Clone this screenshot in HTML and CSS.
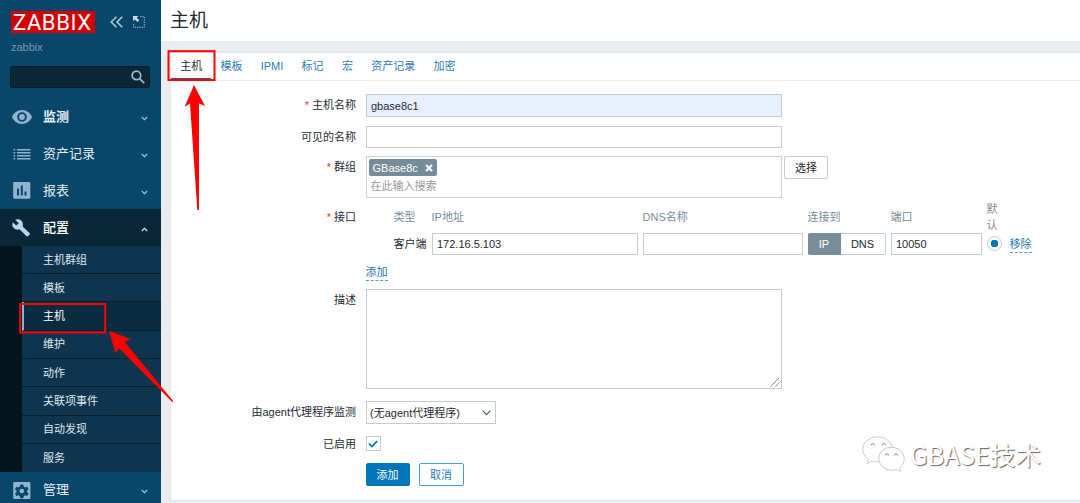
FILE: index.html
```html
<!DOCTYPE html>
<html lang="zh-CN">
<head>
    <meta charset="UTF-8">
    <meta name="viewport" content="width=device-width, initial-scale=1.0">
    <title>主机</title>
    <link rel="stylesheet" href="styles.css">
</head>
<body>
    <aside class="sidebar">
        <div class="sidebar-header">
            <div class="logo">ZABBIX</div>
            <svg class="collapse-icon" width="14" height="12" viewBox="0 0 14 12"><path d="M6.5 .7L1.2 6l5.3 5.3M12.3.7L7 6l5.3 5.3"/></svg>
            <svg class="kiosk-icon" width="12" height="12" viewBox="0 0 12 12">
                <path class="dots" d="M7 .7h4.3v10.6H.7V7"/>
                <path class="arrow" d="M0 0h5.4L3.7 1.7l2.6 2.6-1.8 1.8-2.7-2.7L0 5.3z"/>
            </svg>
        </div>
        <div class="server-name">zabbix</div>
        <div class="search">
            <svg width="14" height="14" viewBox="0 0 14 14"><circle cx="5.4" cy="5.4" r="4.3"/><path d="M8.6 8.6l4.6 4.6"/></svg>
        </div>
        <nav class="menu">
            <a class="menu-item current">
                <svg class="menu-icon" width="20" height="14" viewBox="0 0 20 14"><path fill-rule="evenodd" d="M10 0C5.400 0 1.600 2.900 0 7c1.600 4.100 5.400 7 10 7s8.400-2.900 10-7c-1.600-4.100-5.400-7-10-7zm0 2.200a4.800 4.800 0 1 1 0 9.600 4.800 4.800 0 0 1 0-9.600zm0 1.900a2.900 2.900 0 1 0 0 5.800 2.900 2.900 0 0 0 0-5.800z"/></svg>
                <span>监测</span>
                <svg class="chevron" width="7" height="5" viewBox="0 0 7 5"><path d="M.8 1l2.700 2.600L6.200 1"/></svg>
            </a>
            <a class="menu-item">
                <svg class="menu-icon" width="20" height="12" viewBox="0 0 20 12"><path d="M1.500 1h1.700v1.500H1.500zM5 1h13.500v1.500H5zM1.500 4h1.700v1.500H1.500zM5 4h13.500v1.500H5zM1.500 7h1.700v1.500H1.500zM5 7h13.500v1.500H5zM1.500 10h1.700v1.500H1.500zM5 10h13.500v1.500H5z"/></svg>
                <span>资产记录</span>
                <svg class="chevron" width="7" height="5" viewBox="0 0 7 5"><path d="M.8 1l2.700 2.600L6.200 1"/></svg>
            </a>
            <a class="menu-item">
                <svg class="menu-icon" width="20" height="17" viewBox="0 0 20 17"><path fill-rule="evenodd" d="M2.500 0h14.500q1.300 0 1.300 1.300v14.200q0 1.300-1.300 1.300H2.500q-1.300 0-1.300-1.300V1.300Q1.200 0 2.500 0zM5 6.500v7h2v-7zm3.800-3v10h2v-10zm3.700 6v4h2v-4z"/></svg>
                <span>报表</span>
                <svg class="chevron" width="7" height="5" viewBox="0 0 7 5"><path d="M.8 1l2.700 2.600L6.200 1"/></svg>
            </a>
            <a class="menu-item open">
                <svg class="menu-icon" width="20" height="18" viewBox="0 0 20 18"><path d="M17.700 14.300L10.600 7.500C11.300 5.500 10.900 3.300 9.300 1.800 7.600.2 5.200-.1 3.200.8l3.500 3.400-2.500 2.400L.8 3.200c-.9 2-.6 4.300 1 5.900 1.600 1.500 3.800 1.900 5.700 1.200l7 6.900c.4.400.9.400 1.300 0l1.900-1.700c.4-.3.4-.9 0-1.200z"/></svg>
                <span>配置</span>
                <svg class="chevron" width="7" height="5" viewBox="0 0 7 5"><path d="M.8 4l2.700-2.600L6.200 4"/></svg>
            </a>
            <div class="submenu">
                <a>主机群组</a>
                <a>模板</a>
                <a class="selected">主机</a>
                <a>维护</a>
                <a>动作</a>
                <a>关联项事件</a>
                <a>自动发现</a>
                <a>服务</a>
            </div>
            <a class="menu-item admin">
                <svg class="menu-icon" width="20" height="17" viewBox="0 0 20 17">
                    <rect x="1.200" width="17.200" height="17" rx="1.300"/>
                    <g class="gear"><path d="M8.300 2.500h3l.4 2.100 1.500.9 2-.8 1.500 2.600-1.600 1.300v1.600l1.600 1.300-1.500 2.600-2-.8-1.500.9-.4 2.100h-3l-.4-2.100-1.500-.9-2 .8-1.500-2.600 1.600-1.300V8.600L2.900 7.300l1.500-2.600 2 .8 1.500-.9z"/></g>
                    <circle cx="9.800" cy="9" r="2.300"/>
                </svg>
                <span>管理</span>
                <svg class="chevron" width="7" height="5" viewBox="0 0 7 5"><path d="M.8 1l2.700 2.600L6.200 1"/></svg>
            </a>
        </nav>
    </aside>

    <main class="main">
        <h1 class="page-title">主机</h1>
        <div class="panel">
            <div class="tabs">
                <a class="active">主机</a>
                <a>模板</a>
                <a>IPMI</a>
                <a>标记</a>
                <a>宏</a>
                <a>资产记录</a>
                <a>加密</a>
            </div>
            <form class="form">
                <div class="row row-name">
                    <label class="required">主机名称</label>
                    <div class="input wide filled">gbase8c1</div>
                </div>
                <div class="row row-visible">
                    <label>可见的名称</label>
                    <div class="input wide"></div>
                </div>
                <div class="row row-groups">
                    <label class="required">群组</label>
                    <div class="multiselect">
                        <span class="tag">GBase8c <svg width="8" height="8" viewBox="0 0 8 8"><path d="M1 1l6 6M7 1L1 7"/></svg></span>
                        <div class="placeholder">在此输入搜索</div>
                    </div>
                    <div class="btn btn-select">选择</div>
                </div>
                <div class="row row-interfaces">
                    <label class="required">接口</label>
                    <div class="interfaces">
                        <div class="head">类型</div>
                        <div class="head">IP地址</div>
                        <div class="head">DNS名称</div>
                        <div class="head">连接到</div>
                        <div class="head">端口</div>
                        <div class="head">默认</div>
                        <div></div>
                        <div class="type">客户端</div>
                        <div class="input">172.16.5.103</div>
                        <div class="input"></div>
                        <div class="segmented"><span class="on">IP</span><span>DNS</span></div>
                        <div class="input">10050</div>
                        <div class="radio"></div>
                        <div class="action"><a class="link">移除</a></div>
                    </div>
                </div>
                <div class="row row-add">
                    <label></label>
                    <a class="link">添加</a>
                </div>
                <div class="row row-description">
                    <label>描述</label>
                    <div class="textarea">
                        <svg width="10" height="10" viewBox="0 0 10 10"><path d="M.5 9.500l9-9M5.500 9.500l4-4"/></svg>
                    </div>
                </div>
                <div class="row row-proxy">
                    <label>由agent代理程序监测</label>
                    <div class="select">(无agent代理程序)
                        <svg width="9" height="6" viewBox="0 0 9 6"><path d="M.7.7l3.800 3.900L8.300.7"/></svg>
                    </div>
                </div>
                <div class="row row-enabled">
                    <label>已启用</label>
                    <div class="checkbox"><svg width="10" height="8" viewBox="0 0 10 8"><path d="M.9 3.500l3 3L9.200 1.200"/></svg></div>
                </div>
                <div class="row row-buttons">
                    <label></label>
                    <div class="btn primary">添加</div>
                    <div class="btn secondary">取消</div>
                </div>
            </form>
        </div>
    </main>

    <div class="watermark">
        <svg width="43" height="36" viewBox="0 0 43 36">
            <path class="bubble" d="M15.500 1C7.500 1 1 6.500 1 13.500c0 4 2 7.300 5.500 9.700L5.200 27.500l5-2.600c2 .6 3.500.8 5.800.8l14-14.200C28.500 5 22.500 1 15.500 1z"/>
            <path class="bubble" d="M29.500 11.500C22.500 11.500 17 16.300 17 22.500s5.500 11.500 12.500 11.500c2 0 3.500-.3 5-.8l4 2-1-3.500c2.500-2 4.500-5 4.500-8.700 0-6.500-5.500-11.500-12.500-11.500z"/>
            <path class="eye" d="M9 9.500a1.800 1.800 0 0 1 3.600 0M20 9.500a1.800 1.800 0 0 1 3.600 0M23.500 19.500a1.600 1.600 0 0 1 3.200 0M32.500 19.500a1.600 1.600 0 0 1 3.200 0"/>
        </svg>
        <span>GBASE技术</span>
    </div>

    <svg class="annotations" width="1080" height="503" viewBox="0 0 1080 503">
        <rect x="168.500" y="51.200" width="46" height="28.800"/>
        <rect x="20.200" y="304" width="85" height="28.500"/>
        <path d="M194 85l11 21-6-2.500V210h-1.700L190 103.500l-5.300 3.200z"/>
        <path d="M109 330.700l21.700 8.600-6 2.700 48.600 59.300-.8.900L119 348.300l-3.700 4.700z"/>
    </svg>
</body>
</html>
```
FILE: styles.css
```css
* {
    box-sizing: border-box;
}

body {
    margin: 0;
    display: flex;
    width: 1080px;
    height: 503px;
    overflow: hidden;
    position: relative;
    background-color: #e9edf0;
    color: #1f2c33;
    font-family: "Liberation Sans", "Noto Sans CJK SC", sans-serif;
    font-size: 11px;
    line-height: 16px;
}

svg {
    display: block;
    flex: none;
}

/* Sidebar */
.sidebar {
    width: 161px;
    height: 503px;
    flex: none;
    overflow: hidden;
    background-color: #0a466a;
}

.sidebar-header {
    display: flex;
    align-items: center;
    padding: 11px 0 0 11px;
}

.logo {
    width: 84px;
    height: 22px;
    padding-left: 2px;
    background-color: #d40000;
    color: #fff;
    font-family: Roboto, sans-serif;
    font-size: 22px;
    line-height: 23px;
    letter-spacing: 0.6px;
}

.collapse-icon {
    margin-left: 15px;
    fill: none;
    stroke: #b3cbda;
    stroke-width: 1.5;
}

.kiosk-icon {
    margin-left: 9px;
}

.kiosk-icon .dots {
    fill: none;
    stroke: #a5c0d0;
    stroke-dasharray: 1.3 1;
}

.kiosk-icon .arrow {
    fill: #c6dbe8;
}

.server-name {
    margin: 6px 0 0 11px;
    color: #7599ae;
}

.search {
    display: flex;
    align-items: center;
    justify-content: flex-end;
    width: 140px;
    height: 22px;
    margin: 11px 0 0 10px;
    padding-right: 4px;
    background-color: #0a2737;
    border: 1px solid #061c29;
    border-radius: 2px;
}

.search svg {
    fill: none;
    stroke: #9db9ca;
    stroke-width: 1.7;
}

.menu {
    margin-top: 10px;
}

.menu-item {
    display: flex;
    align-items: center;
    height: 37px;
    padding: 0 13px 0 12px;
    color: #e3edf3;
    font-size: 13px;
}

.menu-item span {
    flex: 1;
    margin-left: 11px;
}

.menu-item.current {
    font-weight: bold;
}

.menu-item.admin {
    height: 36px;
}

.menu-icon {
    fill: #8fb4cb;
}

.menu-icon .gear {
    fill: #0a466a;
}

.chevron {
    margin-top: 3px;
    fill: none;
    stroke: #a9c3d2;
    stroke-width: 1.2;
}

.menu-item.open {
    background-color: #0a2737;
    color: #fff;
    font-weight: 500;
}

.open .menu-icon {
    fill: #b5d6ec;
}

.open .chevron {
    stroke: #dfeaf0;
}

.submenu {
    height: 226px;
    padding-left: 22px;
    background-color: #04151e;
}

.submenu a {
    display: flex;
    align-items: center;
    height: 28.35px;
    padding-left: 21px;
    background-color: #0f344e;
    border-bottom: 1px solid #07202f;
    color: #dfe8ee;
}

.submenu a:first-child {
    height: 28px;
}

.submenu a:last-child {
    height: 27.9px;
    border-bottom: none;
}

.submenu .selected {
    padding-left: 19px;
    background-color: #0b2b3f;
    border-left: 2px solid #79b8e6;
    color: #fff;
}

/* Page */
.main {
    flex: 1;
    min-width: 0;
}

.page-title {
    height: 41px;
    margin: 0;
    padding-left: 9px;
    background-color: #fff;
    font-size: 19px;
    font-weight: normal;
    line-height: 41px;
}

.panel {
    height: 449px;
    margin: 11px 0 0 9px;
    background-color: #fff;
    border-top: 1px solid #dfe4e7;
    border-bottom: 1px solid #dfe4e7;
    border-left: 1px solid #e2e7ea;
}

.tabs {
    display: flex;
    height: 28px;
    border-bottom: 1px solid #ebeef0;
}

.tabs a {
    padding: 5px 9.150px 0;
    color: #2b7db5;
}

.tabs .active {
    color: #1f2c33;
    border-bottom: 2px solid #36508a;
}

/* Form */
.row {
    display: flex;
    align-items: flex-start;
}

.row label {
    width: 185px;
    margin-right: 9.500px;
    flex: none;
    padding-top: 3px;
    text-align: right;
    white-space: nowrap;
}

.required::before {
    content: "*";
    margin-right: 3px;
    color: #e33734;
}

.input {
    height: 22px;
    padding: 0 4.500px;
    background-color: #fff;
    border: 1px solid #c2cdd3;
    line-height: 21px;
}

.wide {
    width: 416px;
}

.filled {
    height: 23px;
    background-color: #e8f0fe;
    line-height: 22px;
}

.row-name {
    margin-top: 13px;
}

.row-visible {
    margin-top: 9px;
}

.row-groups {
    margin-top: 8px;
}

.multiselect {
    width: 416px;
    height: 42px;
    padding: 2px;
    border: 1px solid #c9d3d8;
}

.tag {
    display: flex;
    align-items: center;
    justify-content: space-between;
    width: 68px;
    height: 17px;
    padding: 0 4px;
    background-color: #768d99;
    border-radius: 2px;
    color: #fff;
}

.tag svg {
    fill: none;
    stroke: #fff;
    stroke-width: 2;
}

.placeholder {
    margin: 2px 0 0 2px;
    color: #9a9a9a;
}

.btn {
    width: 44px;
    height: 23px;
    border: 1px solid #c2cdd3;
    border-radius: 2px;
    line-height: 22px;
    text-align: center;
}

.btn-select {
    margin-left: 2.500px;
}

.row-interfaces {
    margin-top: 3px;
}

.row-interfaces label {
    padding-top: 8px;
}

.interfaces {
    display: grid;
    grid-template-columns: 33px 206px 160px 78px 91px 15px 25px;
    grid-template-rows: 32px 22px;
    column-gap: 5px;
    align-items: center;
    margin-left: 28px;
}

.interfaces .head {
    color: #768d99;
}

.segmented {
    display: flex;
    height: 22px;
    border: 1px solid #c2cdd3;
    border-radius: 2px;
    line-height: 20px;
    text-align: center;
}

.segmented span {
    flex: 1;
}

.segmented .on {
    flex: none;
    width: 33px;
    margin: -1px 0 -1px -1px;
    background-color: #768d99;
    border-radius: 2px 0 0 2px;
    color: #fff;
    line-height: 22px;
}

.radio {
    width: 15px;
    height: 15px;
    margin-top: -2px;
    border: 1px solid #c2cdd3;
    border-radius: 50%;
    background: radial-gradient(circle, #0275b8 3.500px, #fff 4px);
}

.action {
    padding-left: 3px;
    white-space: nowrap;
}

.link {
    display: inline-block;
    height: 17px;
    border-bottom: 1px dashed #5a9fcb;
    color: #1f77b2;
    line-height: 16px;
}

.row-add {
    margin-top: 9px;
    height: 16px;
}

.row-description {
    margin-top: 9px;
}

.textarea {
    display: flex;
    align-items: flex-end;
    justify-content: flex-end;
    width: 416px;
    height: 100px;
    padding: 1px;
    border: 1px solid #c2cdd3;
}

.textarea svg {
    fill: none;
    stroke: #8d8d8d;
}

.row-proxy {
    margin-top: 12px;
}

.select {
    display: flex;
    align-items: center;
    justify-content: space-between;
    width: 130px;
    height: 23px;
    padding: 0 3.500px;
    border: 1px solid #c2cdd3;
    white-space: nowrap;
}

.select svg {
    fill: none;
    stroke: #4a565c;
    stroke-width: 1.1;
}

.row-enabled {
    margin-top: 11px;
}

.row-enabled label {
    padding-top: 1px;
}

.checkbox {
    display: flex;
    align-items: center;
    justify-content: center;
    width: 15px;
    height: 15px;
    margin-top: 1px;
    border: 1px solid #c2cdd3;
}

.checkbox svg {
    fill: none;
    stroke: #0275b8;
    stroke-width: 1.7;
}

.row-buttons {
    margin-top: 11px;
}

.primary {
    background-color: #0275b8;
    border-color: #0275b8;
    color: #fff;
}

.secondary {
    width: 45px;
    margin-left: 9px;
    border-color: #4b9aca;
    color: #1f77b2;
}

/* Overlays */
.watermark {
    position: absolute;
    left: 862px;
    top: 436px;
    display: flex;
    align-items: center;
    color: #fff;
    font-family: "Noto Sans CJK SC", sans-serif;
    font-size: 25.500px;
    line-height: 36px;
    text-shadow: 1px 1px 1px #666;
}

.watermark span {
    margin-left: 5px;
}

.watermark .bubble {
    fill: #fff;
    stroke: #ddd;
    stroke-width: 0.6;
    filter: drop-shadow(0.6px 0.9px 0.4px #777);
}

.watermark .eye {
    fill: none;
    stroke: #888;
}

.annotations {
    position: absolute;
    left: 0;
    top: 0;
    fill: #f00;
    pointer-events: none;
}

.annotations rect {
    fill: none;
    stroke: #f00;
    stroke-width: 2;
}
```
